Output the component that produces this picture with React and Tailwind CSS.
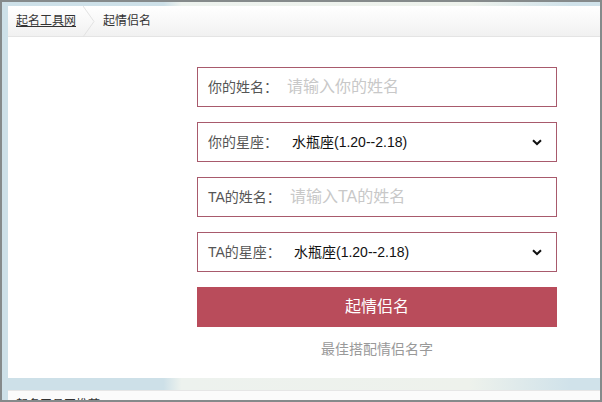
import React from 'react';

const font = { fontFamily: '"Liberation Sans", "Noto Sans CJK SC", sans-serif' };

const Chevron = () => (
  <svg width="10" height="7" viewBox="0 0 10 7" className="shrink-0">
    <path d="M1 1.2 L5 5 L9 1.2" fill="none" stroke="#111" strokeWidth="2" />
  </svg>
);

const InputRow = ({ label, placeholder, labelWidth }) => (
  <div className="flex items-center h-10 border border-[#a85a6c] bg-white pl-[10px]">
    <span className={`${labelWidth} shrink-0 text-sm text-[#555]`}>{label}</span>
    <span className="text-base text-[#c8c8c8]">{placeholder}</span>
  </div>
);

const SelectRow = ({ label, labelWidth }) => (
  <div className="flex items-center h-10 border border-[#a85a6c] bg-white pl-[10px] pr-[14px]">
    <span className={`${labelWidth} shrink-0 text-sm text-[#555]`}>{label}</span>
    <span className="flex-1 text-sm text-[#111]">水瓶座(1.20--2.18)</span>
    <Chevron />
  </div>
);

export default function App() {
  return (
    <div
      style={font}
      className="w-[602px] h-[402px] overflow-hidden border-2 border-[#858a8b] bg-[linear-gradient(90deg,#cde0e8_0%,#cde0e8_27%,#edf2ee_30%,#eef2ec_78%,#d0e2ea_95%)]"
    >
      <div className="pl-[6px] pt-[4px]">
        <div className="bg-white h-[372px]">
          <div className="flex items-center h-[31px] border-b border-[#e4e4e4] bg-gradient-to-b from-white to-[#f1f1f1] text-xs">
            <a className="ml-2 text-[#333] underline">起名工具网</a>
            <svg width="12" height="31" viewBox="0 0 12 31" className="ml-[7px]">
              <path d="M0 0 L11 15.5 L0 31" fill="none" stroke="#e2e2e2" />
            </svg>
            <span className="ml-2 text-[#333]">起情侣名</span>
          </div>
          <div className="ml-[189px] w-[360px] pt-[30px] flex flex-col gap-[15px]">
            <InputRow label="你的姓名：" placeholder="请输入你的姓名" labelWidth="w-[79px]" />
            <SelectRow label="你的星座：" labelWidth="w-[84px]" />
            <InputRow label="TA的姓名：" placeholder="请输入TA的姓名" labelWidth="w-[82px]" />
            <SelectRow label="TA的星座：" labelWidth="w-[86px]" />
            <div className="flex items-center justify-center h-10 bg-[#b94c5b] text-base text-white">起情侣名</div>
            <p className="-mt-[3px] text-center text-sm text-[#999]">最佳搭配情侣名字</p>
          </div>
        </div>
        <div className="mt-[12px] h-[20px] bg-[#fbfbfb] border-t border-[#e6e6e6] pl-2 pt-[6px] text-xs text-[#333]">起名工具网推荐</div>
      </div>
    </div>
  );
}
